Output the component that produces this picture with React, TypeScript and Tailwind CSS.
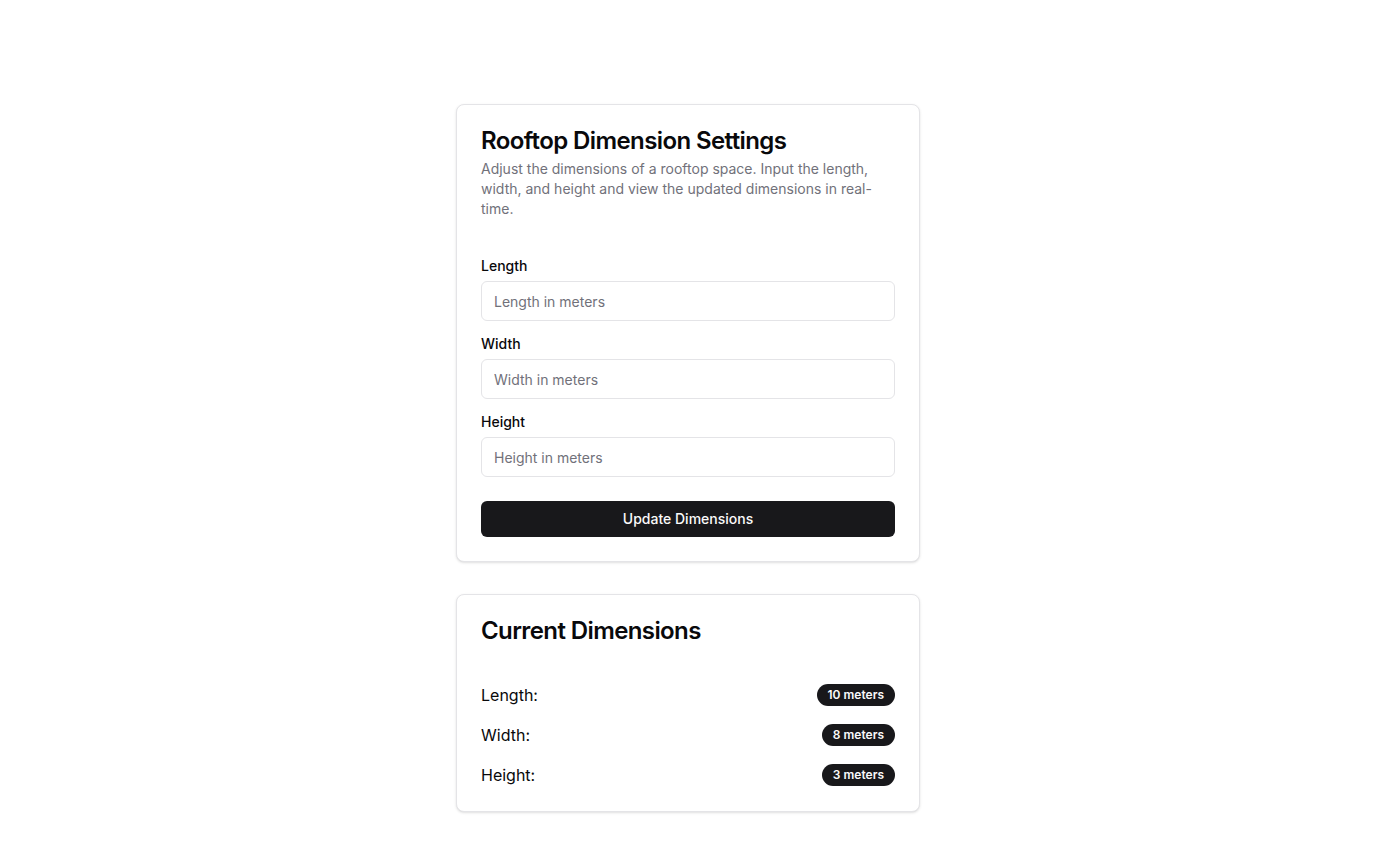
import { useState } from "react";

const FIELDS = [
  { key: "length", label: "Length" },
  { key: "width", label: "Width" },
  { key: "height", label: "Height" },
] as const;

type Dims = { length: number; width: number; height: number };

export default function App() {
  const [dims, setDims] = useState<Dims>({ length: 10, width: 8, height: 3 });
  const [form, setForm] = useState({ length: "", width: "", height: "" });

  const update = () => {
    setDims((d) => ({
      length: Number(form.length) || d.length,
      width: Number(form.width) || d.width,
      height: Number(form.height) || d.height,
    }));
  };

  return (
    <div className="min-h-screen bg-white pt-[104px] pb-14 font-['Inter',sans-serif] text-[#09090b]">
      <div className="mx-auto flex w-[464px] flex-col gap-8">
        {/* Settings card */}
        <div className="rounded-lg border border-[#e4e4e7] bg-white shadow-sm">
          <div className="flex flex-col gap-1.5 p-6">
            <h2 className="text-2xl leading-none font-semibold tracking-tight">
              Rooftop Dimension Settings
            </h2>
            <p className="text-sm text-[#71717a]">
              Adjust the dimensions of a rooftop space. Input the length, width, and height and view the updated dimensions in real-time.
            </p>
          </div>
          <div className="px-6 pt-4 pb-6">
            <div className="flex flex-col gap-4">
              {FIELDS.map((f) => (
                <div key={f.key} className="flex flex-col gap-2">
                  <label className="text-sm leading-none font-medium">{f.label}</label>
                  <input
                    type="number"
                    value={form[f.key]}
                    onChange={(e) => setForm({ ...form, [f.key]: e.target.value })}
                    placeholder={`${f.label} in meters`}
                    className="h-10 w-full rounded-md border border-[#e4e4e7] bg-white px-3 text-sm outline-none placeholder:text-[#71717a]"
                  />
                </div>
              ))}
            </div>
            <button
              onClick={update}
              className="mt-6 flex h-9 w-full items-center justify-center rounded-md bg-[#18181b] text-sm font-medium text-[#fafafa]"
            >
              Update Dimensions
            </button>
          </div>
        </div>

        {/* Current values card */}
        <div className="rounded-lg border border-[#e4e4e7] bg-white shadow-sm">
          <div className="p-6">
            <h2 className="text-2xl leading-none font-semibold tracking-tight">Current Dimensions</h2>
          </div>
          <div className="flex flex-col gap-4 px-6 pt-4 pb-6">
            {FIELDS.map((f) => (
              <div key={f.key} className="flex h-6 items-center justify-between">
                <span className="text-base">{f.label}:</span>
                <span className="rounded-full border border-transparent bg-[#18181b] px-2.5 py-0.5 text-xs font-semibold text-[#fafafa]">
                  {dims[f.key]} meters
                </span>
              </div>
            ))}
          </div>
        </div>
      </div>
    </div>
  );
}
